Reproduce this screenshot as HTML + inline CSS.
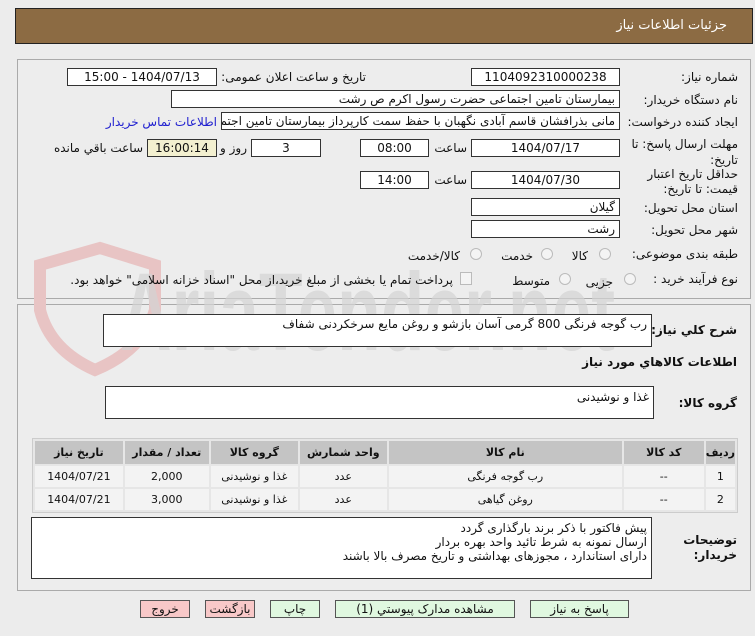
<!DOCTYPE html>
<html><head><meta charset="utf-8"><style>
*{margin:0;padding:0;box-sizing:border-box}
body{width:755px;height:636px;background:#ececec;font-family:"DejaVu Sans","Liberation Sans",sans-serif;font-size:12px;color:#111;position:relative;overflow:hidden}
.a{position:absolute;white-space:nowrap}
.r{direction:rtl}
.in{position:absolute;background:#fff;border:1px solid #333;height:18px;line-height:16px;font-size:12px;padding:0 4px;direction:rtl;white-space:nowrap;overflow:hidden}
.c{text-align:center}
.lbl{position:absolute;direction:rtl;text-align:right;font-size:12px}
.rad{position:absolute;width:12px;height:12px;border-radius:50%;border:1px solid #bbb;background:#f4f4f4}
.btn{position:absolute;top:600px;height:18px;border:1px solid #555;text-align:center;line-height:16px;font-size:12px}
table{border-collapse:separate;border-spacing:2px;position:absolute;left:32px;top:438px;width:706px;background:#e6e6e6;border:1px solid #ccc}
td,th{height:21px;text-align:center;font-size:11px}
th{background:#c4c4c4;font-weight:bold;height:23px}
td{background:#f3f3f3}
</style></head><body>
<div class="a" style="left:15px;top:8px;width:738px;height:36px;background:#8c6b43;border:1px solid #222"></div>
<div class="a r" style="right:28px;top:18px;color:#fff;font-size:13px">جزئیات اطلاعات نیاز</div>

<div class="a" style="left:17px;top:59px;width:734px;height:240px;border:1px solid #aaa;background:#ededed"></div>
<div class="a" style="left:17px;top:304px;width:734px;height:287px;border:1px solid #aaa;background:#ededed"></div>

<!-- watermark -->
<svg class="a" style="left:15px;top:240px" width="640" height="140">
<path d="M25 25 L85 8 L140 25 L140 70 Q128 110 80 130 Q35 110 25 70 Z" fill="none" stroke="#e8c4c4" stroke-width="12"/>
<text x="105" y="110" font-family="Liberation Sans" font-weight="bold" font-size="110" textLength="495" lengthAdjust="spacingAndGlyphs" fill="#d4d4d4" opacity="0.7">AriaTender.net</text>
</svg>

<div class="lbl" style="right:17px;top:70px">شماره نیاز:</div>
<div class="in c" style="left:471px;top:68px;width:149px">1104092310000238</div>
<div class="lbl" style="right:389px;top:70px">تاریخ و ساعت اعلان عمومی:</div>
<div class="in c" style="left:67px;top:68px;width:150px">1404/07/13 - 15:00</div>

<div class="lbl" style="right:17px;top:93px">نام دستگاه خریدار:</div>
<div class="in" style="left:171px;top:90px;width:449px">بیمارستان  تامین اجتماعی حضرت رسول اکرم ص رشت</div>

<div class="lbl" style="right:17px;top:115px">ایجاد کننده درخواست:</div>
<div class="in" style="left:221px;top:112px;width:399px">مانی بذرافشان قاسم آبادی نگهبان با حفظ سمت کارپرداز بیمارستان  تامین اجتماعی</div>
<div class="lbl" style="right:538px;top:115px;color:#2020d0">اطلاعات تماس خریدار</div>

<div class="lbl" style="right:17px;top:136px;line-height:16px">مهلت ارسال پاسخ: تا<br>تاریخ:</div>
<div class="in c" style="left:471px;top:139px;width:149px">1404/07/17</div>
<div class="lbl" style="right:288px;top:141px">ساعت</div>
<div class="in c" style="left:360px;top:139px;width:69px">08:00</div>
<div class="in c" style="left:251px;top:139px;width:70px">3</div>
<div class="lbl" style="right:508px;top:141px">روز و</div>
<div class="in c" style="left:147px;top:139px;width:70px;background:#f3f0d0">16:00:14</div>
<div class="lbl" style="right:612px;top:141px">ساعت باقي مانده</div>

<div class="lbl" style="right:17px;top:167px;line-height:15px">حداقل تاریخ اعتبار<br>قیمت: تا تاریخ:</div>
<div class="in c" style="left:471px;top:171px;width:149px">1404/07/30</div>
<div class="lbl" style="right:288px;top:173px">ساعت</div>
<div class="in c" style="left:360px;top:171px;width:69px">14:00</div>

<div class="lbl" style="right:17px;top:201px">استان محل تحویل:</div>
<div class="in" style="left:471px;top:198px;width:149px">گیلان</div>
<div class="lbl" style="right:17px;top:223px">شهر محل تحویل:</div>
<div class="in" style="left:471px;top:220px;width:149px">رشت</div>

<div class="lbl" style="right:17px;top:247px">طبقه بندی موضوعی:</div>
<div class="rad" style="left:599px;top:248px"></div><div class="lbl" style="right:167px;top:249px">کالا</div>
<div class="rad" style="left:541px;top:248px"></div><div class="lbl" style="right:222px;top:249px">خدمت</div>
<div class="rad" style="left:470px;top:248px"></div><div class="lbl" style="right:295px;top:249px">کالا/خدمت</div>

<div class="lbl" style="right:17px;top:272px">نوع فرآیند خرید :</div>
<div class="rad" style="left:624px;top:273px"></div><div class="lbl" style="right:142px;top:275px">جزیی</div>
<div class="rad" style="left:559px;top:273px"></div><div class="lbl" style="right:205px;top:274px">متوسط</div>
<div class="a" style="left:460px;top:272px;width:12px;height:13px;border:1px solid #bbb;background:#f4f4f4"></div>
<div class="lbl" style="right:302px;top:273px">پرداخت تمام یا بخشی از مبلغ خرید،از محل "اسناد خزانه اسلامی" خواهد بود.</div>

<div class="lbl" style="right:18px;top:323px;font-weight:bold">شرح کلي نیاز:</div>
<div class="in" style="left:103px;top:314px;width:549px;height:33px;line-height:18px">رب گوجه فرنگی 800 گرمی آسان بازشو و روغن مایع سرخکردنی شفاف</div>
<div class="lbl" style="right:18px;top:355px;font-weight:bold">اطلاعات کالاهاي مورد نیاز</div>
<div class="lbl" style="right:18px;top:396px;font-weight:bold">گروه کالا:</div>
<div class="in" style="left:105px;top:386px;width:549px;height:33px;line-height:20px">غذا و نوشیدنی</div>

<table dir="rtl">
<tr><th style="width:27px">ردیف</th><th style="width:80px">کد کالا</th><th style="width:233px">نام کالا</th><th style="width:87px">واحد شمارش</th><th style="width:87px">گروه کالا</th><th style="width:84px">تعداد / مقدار</th><th>تاریخ نیاز</th></tr>
<tr><td>1</td><td>--</td><td>رب گوجه فرنگی</td><td>عدد</td><td>غذا و نوشیدنی</td><td>2,000</td><td>1404/07/21</td></tr>
<tr><td>2</td><td>--</td><td>روغن گیاهی</td><td>عدد</td><td>غذا و نوشیدنی</td><td>3,000</td><td>1404/07/21</td></tr>
</table>

<div class="lbl" style="right:18px;top:533px;font-weight:bold;line-height:15px">توضیحات<br>خریدار:</div>
<div class="in" style="left:31px;top:517px;width:621px;height:62px;line-height:14px;padding-top:3px;white-space:normal">پیش فاکتور با ذکر برند بارگذاری گردد<br>ارسال نمونه به شرط تائید واحد بهره بردار<br>دارای استاندارد ، مجوزهای بهداشتی و تاریخ مصرف بالا باشند</div>

<div class="btn" style="left:140px;width:50px;background:#f8c8c8">خروج</div>
<div class="btn" style="left:205px;width:50px;background:#f8c8c8">بازگشت</div>
<div class="btn" style="left:270px;width:50px;background:#e0f8e0">چاپ</div>
<div class="btn" style="left:335px;width:180px;background:#e0f8e0">مشاهده مدارک پیوستي (1)</div>
<div class="btn" style="left:530px;width:99px;background:#e0f8e0">پاسخ به نیاز</div>
</body></html>
